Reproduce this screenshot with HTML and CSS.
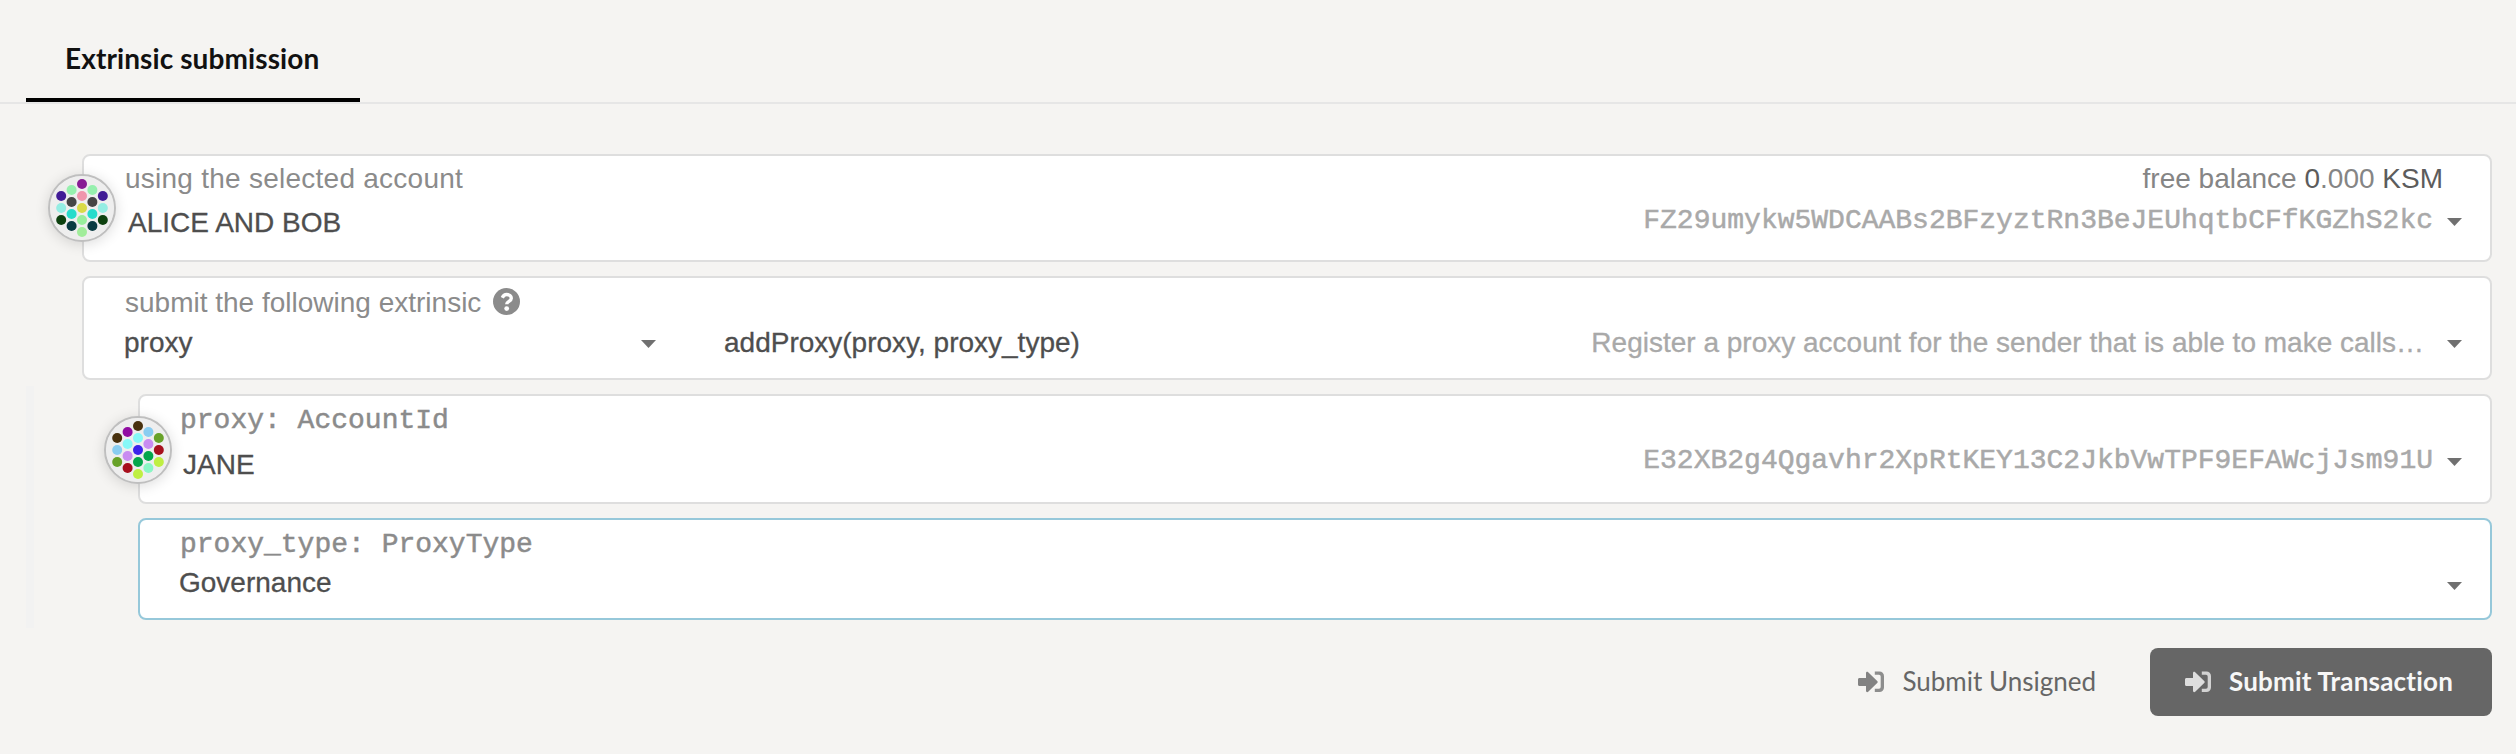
FILE: index.html
```html
<!DOCTYPE html>
<html lang="en">
<head>
<meta charset="utf-8">
<title>Extrinsic submission</title>
<link rel="stylesheet" href="styles.css">
</head>
<body>
<svg class="defs" width="0" height="0">
  <symbol id="sign-in" viewBox="0 0 26 22">
    <path fill="currentColor" d="M1.500 7H8V2.200c0-1.400 1.400-1.700 2.200-.9l9 8.700c.7.7.7 1.400 0 2l-9 8.700c-.8.8-2.200.5-2.200-.9V15H1.500C.6 15 0 14.400 0 13.500V8.500C0 7.600.6 7 1.500 7z"/>
    <path fill="currentColor" opacity=".9" d="M16.800.5H21.500a4.500 4.500 0 0 1 4.500 4.500V16.500a4.500 4.500 0 0 1-4.500 4.500H16.800V17.700H21a1.700 1.700 0 0 0 1.700-1.700V5.500A1.700 1.700 0 0 0 21 3.800H16.800z"/>
  </symbol>
</svg>

<nav class="tabs"><a class="tab">Extrinsic submission</a></nav>

<main class="content">
  <section class="field account">
    <svg class="identicon" viewBox="-32 -32 64 64">
      <circle r="32" fill="#eee"/>
      <circle cx="0" cy="-24" r="5" fill="#871c94"/><circle cx="0" cy="-12" r="5" fill="#ef95ac"/><circle cx="0" cy="0" r="5" fill="#d9da48"/><circle cx="0" cy="12" r="5" fill="#98ee9c"/><circle cx="0" cy="24" r="5" fill="#a1ed9b"/>
      <circle cx="-10.400" cy="-18" r="5" fill="#96f0ae"/><circle cx="-10.400" cy="-6" r="5" fill="#454545"/><circle cx="-10.400" cy="6" r="5" fill="#27dccb"/><circle cx="-10.400" cy="18" r="5" fill="#093b42"/>
      <circle cx="10.400" cy="-18" r="5" fill="#96f0ae"/><circle cx="10.400" cy="-6" r="5" fill="#454545"/><circle cx="10.400" cy="6" r="5" fill="#27dccb"/><circle cx="10.400" cy="18" r="5" fill="#093b42"/>
      <circle cx="-20.800" cy="-12" r="5" fill="#411c96"/><circle cx="-20.800" cy="0" r="5" fill="#94ede3"/><circle cx="-20.800" cy="12" r="5" fill="#0d410f"/>
      <circle cx="20.800" cy="-12" r="5" fill="#411c96"/><circle cx="20.800" cy="0" r="5" fill="#94ede3"/><circle cx="20.800" cy="12" r="5" fill="#0d410f"/>
    </svg>
    <div class="labels">
      <label class="label wide">using the selected account</label>
      <span class="balance">free balance <b>0</b>.000 <b>KSM</b></span>
    </div>
    <div class="value">
      <span class="name">ALICE AND BOB</span>
      <span class="address">FZ29umykw5WDCAABs2BFzyztRn3BeJEUhqtbCFfKGZhS2kc</span>
      <i class="caret"></i>
    </div>
  </section>

  <section class="field extrinsic">
    <div class="labels">
      <label class="label">submit the following extrinsic</label>
      <svg class="help" viewBox="0 0 27 27"><circle cx="13.500" cy="13.500" r="13.500" fill="#8b8b8b"/><path d="M9.300 9.700C10.300 7.600 11.600 6.500 13.700 6.500c2.600 0 4.600 1.600 4.600 3.800 0 3.200-4.600 3-4.600 6" fill="none" stroke="#fff" stroke-width="3.400"/><circle cx="13.700" cy="20.600" r="2.400" fill="#fff"/></svg>
    </div>
    <div class="value">
      <div class="section-select"><span>proxy</span><i class="caret"></i></div>
      <span class="method">addProxy(proxy, proxy_type)</span>
      <span class="description">Register a proxy account for the sender that is able to make calls…</span>
      <i class="caret"></i>
    </div>
  </section>

  <div class="params">
    <section class="field account param">
      <svg class="identicon" viewBox="-32 -32 64 64">
        <circle r="32" fill="#eee"/>
        <circle cx="0" cy="-24" r="5" fill="#48300d"/><circle cx="0" cy="-12" r="5" fill="#86f8f7"/><circle cx="0" cy="0" r="5" fill="#3c22ea"/><circle cx="0" cy="12" r="5" fill="#04a64a"/><circle cx="0" cy="24" r="5" fill="#bfef42"/>
        <circle cx="-10.400" cy="-18" r="5" fill="#900ca2"/><circle cx="-10.400" cy="-6" r="5" fill="#86f8f7"/><circle cx="-10.400" cy="6" r="5" fill="#c98cf1"/><circle cx="-10.400" cy="18" r="5" fill="#a70f1d"/>
        <circle cx="10.400" cy="-18" r="5" fill="#89cdf1"/><circle cx="10.400" cy="-6" r="5" fill="#c98cf1"/><circle cx="10.400" cy="6" r="5" fill="#04a64a"/><circle cx="10.400" cy="18" r="5" fill="#8af6c5"/>
        <circle cx="-20.800" cy="-12" r="5" fill="#48300d"/><circle cx="-20.800" cy="0" r="5" fill="#89cdf1"/><circle cx="-20.800" cy="12" r="5" fill="#68a229"/>
        <circle cx="20.800" cy="-12" r="5" fill="#68a229"/><circle cx="20.800" cy="0" r="5" fill="#a70f1d"/><circle cx="20.800" cy="12" r="5" fill="#bfef42"/>
      </svg>
      <div class="labels"><label class="label mono">proxy: AccountId</label></div>
      <div class="value">
        <span class="name">JANE</span>
        <span class="address">E32XB2g4Qgavhr2XpRtKEY13C2JkbVwTPF9EFAWcjJsm91U</span>
        <i class="caret"></i>
      </div>
    </section>

    <section class="field type focused">
      <div class="labels"><label class="label mono">proxy_type: ProxyType</label></div>
      <div class="value"><span class="name">Governance</span><i class="caret"></i></div>
    </section>
  </div>

  <div class="actions">
    <button class="button"><svg class="icon"><use href="#sign-in"/></svg>Submit Unsigned</button>
    <button class="button primary"><svg class="icon"><use href="#sign-in"/></svg>Submit Transaction</button>
  </div>
</main>
</body>
</html>
```
FILE: styles.css
```css
* { box-sizing: border-box; }

body {
  margin: 0;
  background: #f5f4f2;
  color: #4e4e4e;
  font: 28px/32px "Liberation Sans", Arial, sans-serif;
  overflow: hidden;
}

.defs { display: block; }

.tabs {
  display: flex;
  height: 104px;
  padding-left: 26px;
  border-bottom: 2px solid #e6e6e6;
}

.tab {
  width: 334px;
  padding: 42px 0 0 39px;
  border-bottom: 4px solid #000;
  color: #111;
  font-family: Lato, sans-serif;
  font-weight: 700;
  letter-spacing: .1px;
  white-space: nowrap;
}

.content { padding: 50px 24px 0 26px; }

.field {
  position: relative;
  margin-left: 56px;
  padding: 7px 28px 0 41px;
  background: #fff;
  border: 2px solid #dedede;
  border-radius: 8px;
}

.account { height: 108px; }
.extrinsic { height: 104px; margin-top: 14px; padding-top: 9px; }

.identicon {
  position: absolute;
  left: -36px;
  top: 18px;
  width: 68px;
  height: 68px;
  border: 2px solid #bfbfbf;
  border-radius: 50%;
  background: #eee;
  box-shadow: 0 2px 14px rgba(0, 0, 0, .14);
}

.labels { display: flex; height: 32px; color: #8b8b8b; white-space: nowrap; }
.wide { letter-spacing: .25px; }
.mono {
  font-family: "Liberation Mono", monospace;
  -webkit-text-stroke: .5px currentColor;
}
.help { width: 27px; height: 27px; margin: 1px 0 0 12px; }
.balance { margin-left: auto; padding-right: 19px; color: #858585; }
.balance b { font-weight: 400; color: #5c5c5c; }

.value {
  display: flex;
  align-items: flex-start;
  white-space: nowrap;
  -webkit-text-stroke: .3px currentColor;
}
.account .value { padding: 12px 0 0 3px; }

.address {
  margin: -2px 14px 0 auto;
  color: #a9a9a9;
  font-family: "Liberation Mono", monospace;
  -webkit-text-stroke: .5px currentColor;
}

.caret {
  flex: none;
  width: 15px;
  height: 8px;
  background: #707070;
  clip-path: polygon(0 0, 100% 0, 50% 100%);
}
.value > .caret { margin-top: 11px; }

.extrinsic .value { padding: 8px 0 0 0; margin-left: -1px; }
.section-select { display: flex; justify-content: space-between; width: 532px; }
.section-select .caret { margin-top: 13px; }
.extrinsic .value > .caret { margin-top: 13px; }
.method { margin-left: 68px; }
.description { margin: 0 23px 0 auto; color: #a9a9a9; }

.params {
  margin-top: 6px;
  padding: 8px 0;
  border-left: 8px solid #f2f2f2;
}
.params .field { margin-left: 104px; padding: 9px 28px 0 40px; }
.params .param { height: 110px; }
.param .identicon { top: 20px; }
.params .param .value { padding-top: 12px; }
.param .address { margin-top: -4px; }
.param .value > .caret { margin-top: 9px; }

.params .type { height: 102px; margin-top: 14px; }
.focused { border-color: #96c8da; }
.type .value { justify-content: space-between; padding-top: 6px; margin-left: -1px; }
.type .value > .caret { margin-top: 15px; }

.actions { display: flex; justify-content: flex-end; margin-top: 20px; }

.button {
  display: flex;
  align-items: center;
  height: 68px;
  padding: 0 0 3px;
  border: 0;
  background: none;
  color: #666;
  font: 26px/32px Lato, sans-serif;
  font-variant-ligatures: none;
  white-space: nowrap;
}
.icon { width: 26px; height: 22px; margin: 2px 18px 0 0; color: #828282; }
.primary {
  width: 342px;
  margin-left: 54px;
  padding-left: 35px;
  border-radius: 8px;
  background: #666;
  color: #f7f7f7;
  font-weight: 700;
  letter-spacing: .2px;
}
.primary .icon { color: #dedede; }
```
